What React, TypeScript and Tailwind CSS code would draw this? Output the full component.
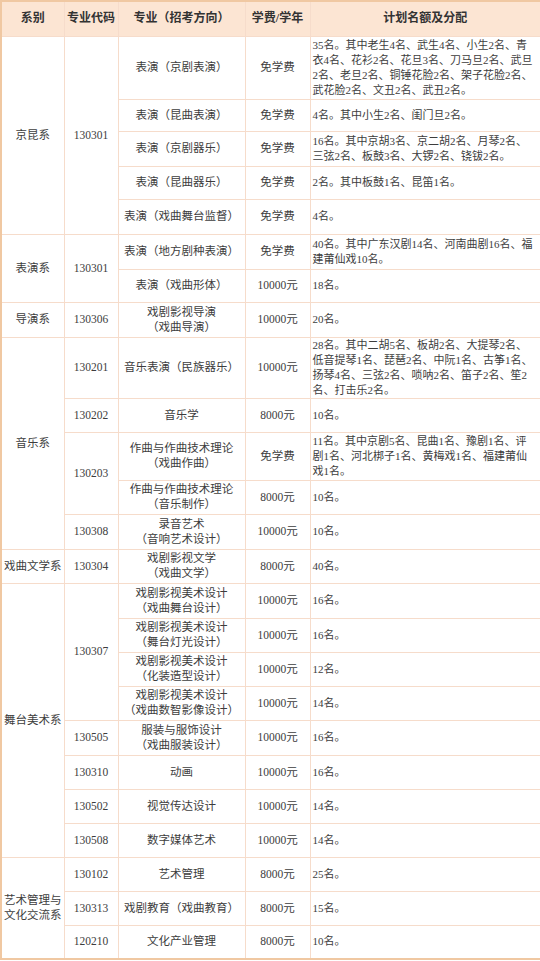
type Row = {
  h: number;
  dept?: { text: string[]; span: number };
  code?: { text: string; span: number };
  major: string[];
  fee: string;
  plan: string[];
};

const rows: Row[] = [
  {
    h: 63,
    dept: { text: ["京昆系"], span: 5 },
    code: { text: "130301", span: 5 },
    major: ["表演（京剧表演）"],
    fee: "免学费",
    plan: [
      "35名。其中老生4名、武生4名、小生2名、青",
      "衣4名、花衫2名、花旦3名、刀马旦2名、武旦",
      "2名、老旦2名、铜锤花脸2名、架子花脸2名、",
      "武花脸2名、文丑2名、武丑2名。",
    ],
  },
  { h: 32, major: ["表演（昆曲表演）"], fee: "免学费", plan: ["4名。其中小生2名、闺门旦2名。"] },
  {
    h: 35,
    major: ["表演（京剧器乐）"],
    fee: "免学费",
    plan: ["16名。其中京胡3名、京二胡2名、月琴2名、", "三弦2名、板鼓3名、大锣2名、铙钹2名。"],
  },
  { h: 33, major: ["表演（昆曲器乐）"], fee: "免学费", plan: ["2名。其中板鼓1名、昆笛1名。"] },
  { h: 35, major: ["表演（戏曲舞台监督）"], fee: "免学费", plan: ["4名。"] },
  {
    h: 35,
    dept: { text: ["表演系"], span: 2 },
    code: { text: "130301", span: 2 },
    major: ["表演（地方剧种表演）"],
    fee: "免学费",
    plan: ["40名。其中广东汉剧14名、河南曲剧16名、福", "建莆仙戏10名。"],
  },
  { h: 33, major: ["表演（戏曲形体）"], fee: "10000元", plan: ["18名。"] },
  {
    h: 35,
    dept: { text: ["导演系"], span: 1 },
    code: { text: "130306", span: 1 },
    major: ["戏剧影视导演", "（戏曲导演）"],
    fee: "10000元",
    plan: ["20名。"],
  },
  {
    h: 60,
    dept: { text: ["音乐系"], span: 5 },
    code: { text: "130201", span: 1 },
    major: ["音乐表演（民族器乐）"],
    fee: "10000元",
    plan: [
      "28名。其中二胡5名、板胡2名、大提琴2名、",
      "低音提琴1名、琵琶2名、中阮1名、古筝1名、",
      "扬琴4名、三弦2名、唢呐2名、笛子2名、笙2",
      "名、打击乐2名。",
    ],
  },
  { h: 34, code: { text: "130202", span: 1 }, major: ["音乐学"], fee: "8000元", plan: ["10名。"] },
  {
    h: 48,
    code: { text: "130203", span: 2 },
    major: ["作曲与作曲技术理论", "（戏曲作曲）"],
    fee: "免学费",
    plan: ["11名。其中京剧5名、昆曲1名、豫剧1名、评", "剧1名、河北梆子1名、黄梅戏1名、福建莆仙", "戏1名。"],
  },
  { h: 34, major: ["作曲与作曲技术理论", "（音乐制作）"], fee: "8000元", plan: ["10名。"] },
  {
    h: 35,
    code: { text: "130308", span: 1 },
    major: ["录音艺术", "（音响艺术设计）"],
    fee: "10000元",
    plan: ["10名。"],
  },
  {
    h: 34,
    dept: { text: ["戏曲文学系"], span: 1 },
    code: { text: "130304", span: 1 },
    major: ["戏剧影视文学", "（戏曲文学）"],
    fee: "8000元",
    plan: ["40名。"],
  },
  {
    h: 35,
    dept: { text: ["舞台美术系"], span: 8 },
    code: { text: "130307", span: 4 },
    major: ["戏剧影视美术设计", "（戏曲舞台设计）"],
    fee: "10000元",
    plan: ["16名。"],
  },
  { h: 34, major: ["戏剧影视美术设计", "（舞台灯光设计）"], fee: "10000元", plan: ["16名。"] },
  { h: 34, major: ["戏剧影视美术设计", "（化装造型设计）"], fee: "10000元", plan: ["12名。"] },
  { h: 34, major: ["戏剧影视美术设计", "（戏曲数智影像设计）"], fee: "10000元", plan: ["14名。"] },
  {
    h: 35,
    code: { text: "130505", span: 1 },
    major: ["服装与服饰设计", "（戏曲服装设计）"],
    fee: "10000元",
    plan: ["16名。"],
  },
  { h: 34, code: { text: "130310", span: 1 }, major: ["动画"], fee: "10000元", plan: ["16名。"] },
  { h: 34, code: { text: "130502", span: 1 }, major: ["视觉传达设计"], fee: "10000元", plan: ["14名。"] },
  { h: 34, code: { text: "130508", span: 1 }, major: ["数字媒体艺术"], fee: "10000元", plan: ["14名。"] },
  {
    h: 34,
    dept: { text: ["艺术管理与", "文化交流系"], span: 3 },
    code: { text: "130102", span: 1 },
    major: ["艺术管理"],
    fee: "8000元",
    plan: ["25名。"],
  },
  { h: 34, code: { text: "130313", span: 1 }, major: ["戏剧教育（戏曲教育）"], fee: "8000元", plan: ["15名。"] },
  { h: 34, code: { text: "120210", span: 1 }, major: ["文化产业管理"], fee: "8000元", plan: ["10名。"] },
];

const cell = "border border-[#f6dccb] align-middle";

export default function App() {
  return (
    <div
      className="w-[540px] bg-white text-[#3d3d3d]"
      style={{ fontFamily: '"Liberation Serif", "Noto Sans CJK SC", serif' }}
    >
      <table className="w-[540px] table-fixed border-collapse border-2 border-[#f0c8a2] text-[11.5px] leading-[15px]">
        <colgroup>
          <col className="w-[63px]" />
          <col className="w-[54px]" />
          <col className="w-[127px]" />
          <col className="w-[65px]" />
          <col className="w-[231px]" />
        </colgroup>
        <thead>
          <tr className="h-[35px] bg-[#fce5d3] text-[12px] text-[#333]">
            <th className={`${cell} font-bold`}>系别</th>
            <th className={`${cell} font-bold`}>专业代码</th>
            <th className={`${cell} font-bold`}>专业（招考方向）</th>
            <th className={`${cell} font-bold`}>学费/学年</th>
            <th className={`${cell} font-bold`}>计划名额及分配</th>
          </tr>
        </thead>
        <tbody>
          {rows.map((r, i) => (
            <tr key={i} style={{ height: r.h }}>
              {r.dept && (
                <td rowSpan={r.dept.span} className={`${cell} text-center whitespace-nowrap`}>
                  {r.dept.text.map((t) => (
                    <div key={t} className={r.dept!.text.length > 1 ? "text-left pl-[2px]" : ""}>
                      {t}
                    </div>
                  ))}
                </td>
              )}
              {r.code && (
                <td rowSpan={r.code.span} className={`${cell} text-center`}>
                  {r.code.text}
                </td>
              )}
              <td className={`${cell} text-center whitespace-nowrap`}>
                {r.major.map((m) => (
                  <div key={m}>{m}</div>
                ))}
              </td>
              <td className={`${cell} text-center whitespace-nowrap`}>{r.fee}</td>
              <td className={`${cell} pl-[2px] whitespace-nowrap overflow-hidden text-[11px]`}>
                {r.plan.map((p) => (
                  <div key={p}>{p}</div>
                ))}
              </td>
            </tr>
          ))}
        </tbody>
      </table>
    </div>
  );
}
